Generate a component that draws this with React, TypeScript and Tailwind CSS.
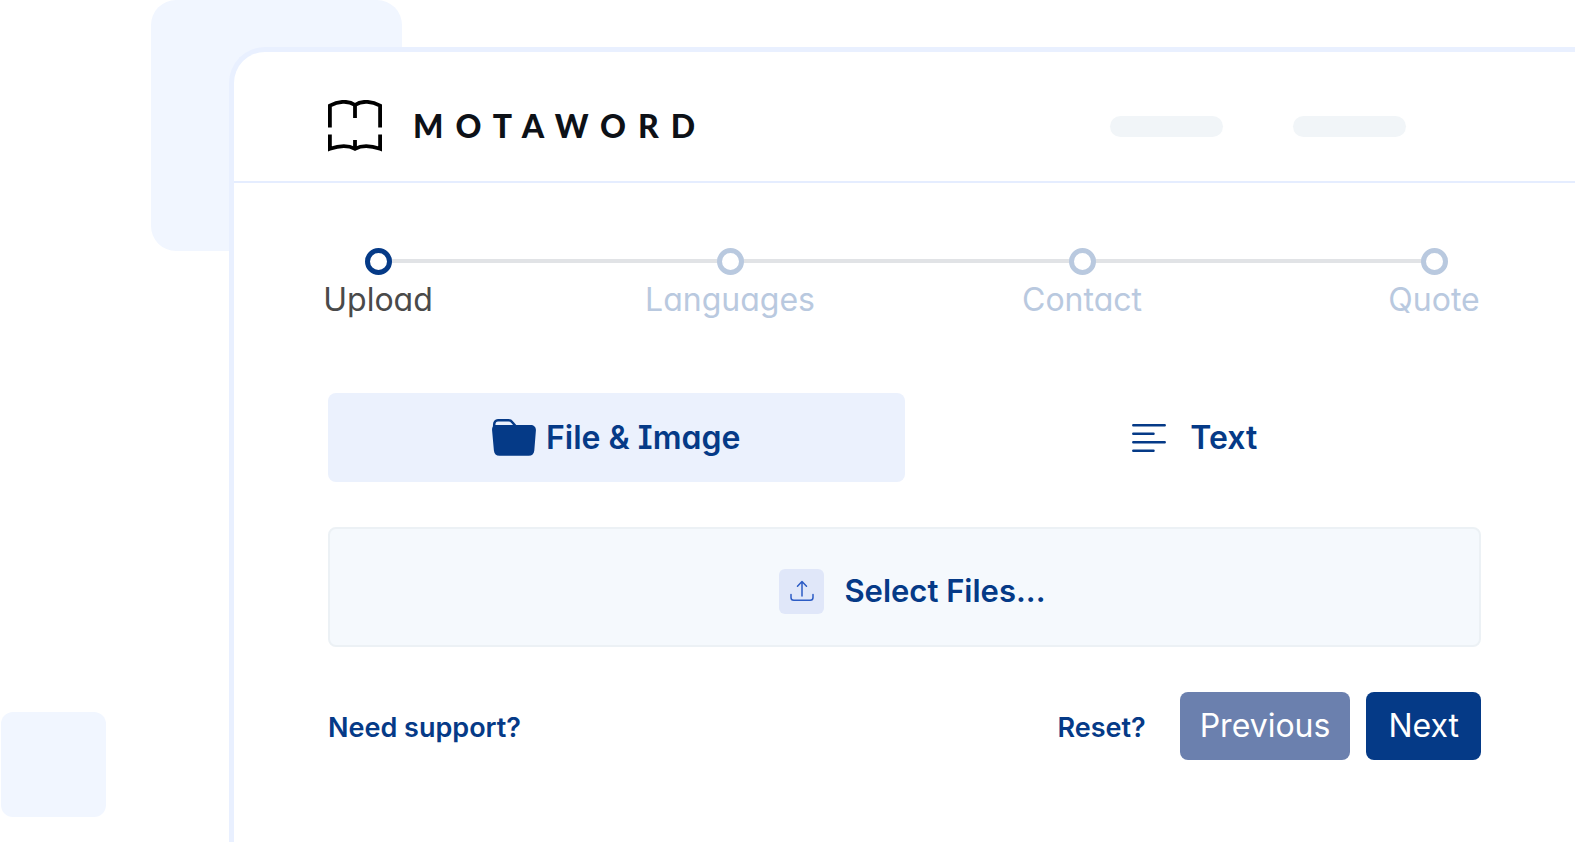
const steps = [
  { label: 'Upload', active: true },
  { label: 'Languages', active: false },
  { label: 'Contact', active: false },
  { label: 'Quote', active: false },
];

function BookLogo() {
  return (
    <svg className="h-[52px] w-[54px]" viewBox="0 0 54 52" fill="none" stroke="#000" strokeWidth="3.8" aria-hidden="true">
      <path d="M1.9 27.5V5.6C10 1.2 20 .2 27 5C34 .2 44 1.2 52.1 5.6V27.5" />
      <path d="M27 4V18" />
      <path d="M1.9 34.5V48.8C10 46 20 45 27 48.8C34 45 44 46 52.1 48.8V34.5" />
      <path d="M27 40V50" />
    </svg>
  );
}

function FolderIcon() {
  return (
    <svg className="h-[37px] w-[44px]" viewBox="0 0 44 37" aria-hidden="true">
      <path d="M2.2 9V5.5C2.2 3 3.5 1.3 6 1.3H16.5C18.3 1.3 19.3 1.9 20.3 3.2L23.5 7" fill="none" stroke="#053a87" strokeWidth="2.5" />
      <path
        d="M4.5 6H38.5C42 6 44.2 8.3 43.9 11.6L42.3 31.5C42 34.8 40 36.8 36.7 36.8H7.5C4.2 36.8 2.2 34.8 1.9 31.5L.1 11.6C-.1 8.3 1 6 4.5 6Z"
        fill="#053a87"
      />
    </svg>
  );
}

function LinesIcon() {
  return (
    <svg className="h-[30px] w-[34px]" viewBox="0 0 34 30" fill="none" stroke="#053a87" strokeWidth="2.5" strokeLinecap="round" aria-hidden="true">
      <path d="M1.3 2.2H32.7M1.3 10.7H21.5M1.3 19.2H32.7M1.3 27.7H21.5" />
    </svg>
  );
}

function UploadIcon() {
  return (
    <svg className="h-6 w-6" viewBox="0 0 24 24" fill="none" stroke="#2c5cc5" strokeWidth="1.5" strokeLinecap="round" strokeLinejoin="round" aria-hidden="true">
      <path d="M12 17V3M7.5 7.2L12 2.5L16.5 7.2" />
      <path d="M1 15.5V18.5C1 20.5 2 21.3 3.8 21.3H20.2C22 21.3 23 20.5 23 18.5V15.5" />
    </svg>
  );
}

export default function App() {
  return (
    <div className="relative isolate flex min-h-screen flex-col overflow-hidden bg-white pt-[47px] pl-[229px] font-['Inter',sans-serif] text-[32px] leading-10 text-[#053a87] [font-feature-settings:'cv11']">
      <div className="absolute top-0 left-[151px] -z-10 size-[251px] rounded-[25px] bg-[#f1f6ff]" />
      <div className="absolute top-[712px] left-px -z-10 size-[105px] rounded-xl bg-[#f1f6ff]" />

      <div className="flex flex-1 flex-col rounded-tl-[36px] border-t-[5px] border-l-[5px] border-[#e9f0ff] bg-white">
        <header className="flex h-[131px] items-center justify-between border-b-2 border-[#e5edff] pt-[18px] pr-[169px] pl-[94px]">
          <a href="#" className="flex items-center gap-[31px] text-[#0d1117]">
            <BookLogo />
            <span className="font-['Lato',sans-serif] text-[32px] font-black tracking-[12px]">MOTAWORD</span>
          </a>
          <div className="flex gap-[70px] pt-0.5">
            <div className="h-[21px] w-[113px] rounded-full bg-[#f1f5f8]" />
            <div className="h-[21px] w-[113px] rounded-full bg-[#f1f5f8]" />
          </div>
        </header>

        <main className="pr-[94px] pb-16 pl-[94px]">
          <ol className="relative mt-[65px] flex justify-between pl-[3px]">
            <li className="absolute top-[11px] right-[47px] left-[50px] h-1 bg-[#e1e3e6]" aria-hidden="true" />
            {steps.map((step) => (
              <li key={step.label} className="relative flex w-[94px] flex-col items-center gap-[5px]">
                <span className={step.active ? 'size-[27px] rounded-full border-[5px] border-[#053a87] bg-white' : 'size-[27px] rounded-full border-[5px] border-[#b9c9df] bg-white'} />
                <span className={step.active ? 'text-[#4a4a4a]' : 'text-[#b9c9df]'}>{step.label}</span>
              </li>
            ))}
          </ol>

          <div className="mt-[73px] grid grid-cols-2 font-semibold" role="tablist">
            <button type="button" role="tab" aria-selected="true" className="flex h-[89px] items-center justify-center gap-[10px] rounded-lg bg-[#ebf1fd]">
              <FolderIcon />
              <span>
                File &amp; <span className="[font-feature-settings:'cv11','cv08']">Image</span>
              </span>
            </button>
            <button type="button" role="tab" aria-selected="false" className="flex h-[89px] items-center justify-center gap-6 rounded-lg pl-1">
              <LinesIcon />
              Text
            </button>
          </div>

          <button type="button" className="mt-[45px] flex h-[120px] w-full items-center justify-center gap-5 rounded-lg border-2 border-[#ecf1f5] bg-[#f5f9fd] pt-2 pl-4 text-[31px] font-semibold">
            <span className="flex size-[45px] items-center justify-center rounded-md bg-[#e0e7f9]">
              <UploadIcon />
            </span>
            Select Files...
          </button>

          <div className="mt-[45px] flex items-center justify-between">
            <a href="#" className="pt-1 text-[27px] font-semibold">Need support?</a>
            <div className="flex items-center gap-4">
              <button type="button" className="mr-[18px] pt-1 text-[27px] font-semibold">Reset?</button>
              <button type="button" className="h-[68px] rounded-lg bg-[#6b80ae] px-5 text-white">Previous</button>
              <button type="button" className="h-[68px] rounded-lg bg-[#053a87] px-[22px] text-white">Next</button>
            </div>
          </div>
        </main>
      </div>
    </div>
  );
}
